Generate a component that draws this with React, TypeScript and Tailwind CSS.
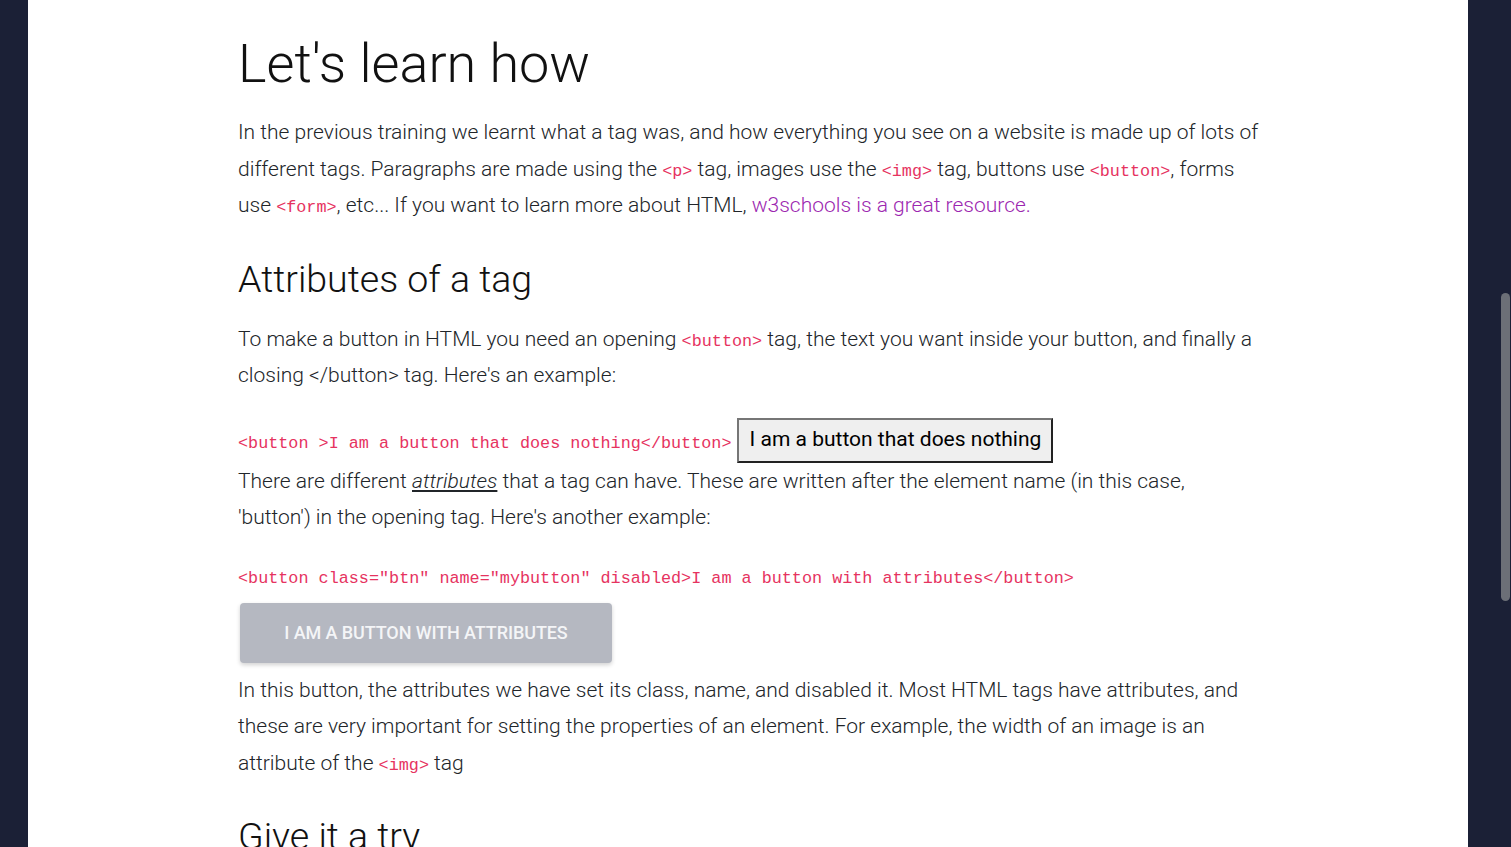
import React from "react";

const C = ({ children }: { children: React.ReactNode }) => (
  <code className="font-['Liberation_Mono',monospace] text-[16.8px] leading-none text-[#e6335f]">{children}</code>
);

export default function App() {
  return (
    <div className="flex h-[847px] w-[1511px] overflow-hidden bg-[#1b2036] font-['Roboto',sans-serif]">
      <div className="w-[28px] shrink-0" />
      <main className="w-[1440px] shrink-0 bg-white pl-[210px] pt-[31px] text-[#212529]">
        <div className="w-[1022px]">
          <h1 className="text-[54px] font-light leading-[65px] text-[#111]">Let's learn how</h1>
          <p className="mt-[18px] text-[21px] font-light leading-[36.5px]">
            In the previous training we learnt what a tag was, and how everything you see on a website is made up of lots of
            different tags. Paragraphs are made using the <C>&lt;p&gt;</C> tag, images use the <C>&lt;img&gt;</C> tag, buttons
            use <C>&lt;button&gt;</C>, forms use <C>&lt;form&gt;</C>, etc... If you want to learn more about HTML,{" "}
            <a className="text-[#9c27b0]">w3schools is a great resource.</a>
          </p>
          <h2 className="mt-[32px] text-[37.5px] font-light leading-[46px] text-[#111]">Attributes of a tag</h2>
          <p className="mt-[19px] text-[21px] font-light leading-[36.5px]">
            To make a button in HTML you need an opening <C>&lt;button&gt;</C> tag, the text you want inside your button, and
            finally a closing &lt;/button&gt; tag. Here's an example:
          </p>
          <div className="mt-[24px] flex items-center gap-[6px]">
            <div className="pt-[6px]">
              <C>&lt;button &gt;I am a button that does nothing&lt;/button&gt;</C>
            </div>
            <button className="flex h-[45px] w-[316px] items-center justify-center border-2 border-t-[#767676] border-l-[#767676] border-r-[#222] border-b-[#222] bg-[#efefef] text-[21px] font-normal text-black">
              I am a button that does nothing
            </button>
          </div>
          <p className="text-[21px] font-light leading-[36.5px]">
            There are different <em className="underline">attributes</em> that a tag can have. These are written after the
            element name (in this case, 'button') in the opening tag. Here's another example:
          </p>
          <div className="mt-[30px] leading-[24px]">
            <C>&lt;button class="btn" name="mybutton" disabled&gt;I am a button with attributes&lt;/button&gt;</C>
          </div>
          <button className="mt-[13px] ml-[2px] flex h-[60px] w-[372px] items-center justify-center rounded-[4px] bg-[#b5b8c1] text-[18px] font-medium uppercase tracking-[-0.1px] text-[#f4f5f7] shadow-[0_2px_4px_rgba(0,0,0,0.18)]">
            I am a button with attributes
          </button>
          <p className="mt-[9px] text-[21px] font-light leading-[36.5px]">
            In this button, the attributes we have set its class, name, and disabled it. Most HTML tags have attributes, and
            these are very important for setting the properties of an element. For example, the width of an image is an
            attribute of the <C>&lt;img&gt;</C> tag
          </p>
          <h2 className="mt-[32px] text-[37.5px] font-light leading-[46px] text-[#111]">Give it a try</h2>
        </div>
      </main>
      <div className="w-[43px] shrink-0 pl-[33px] pt-[293px]">
        <div className="h-[308px] w-[9px] rounded-full bg-[#6c6f77]" />
      </div>
    </div>
  );
}
